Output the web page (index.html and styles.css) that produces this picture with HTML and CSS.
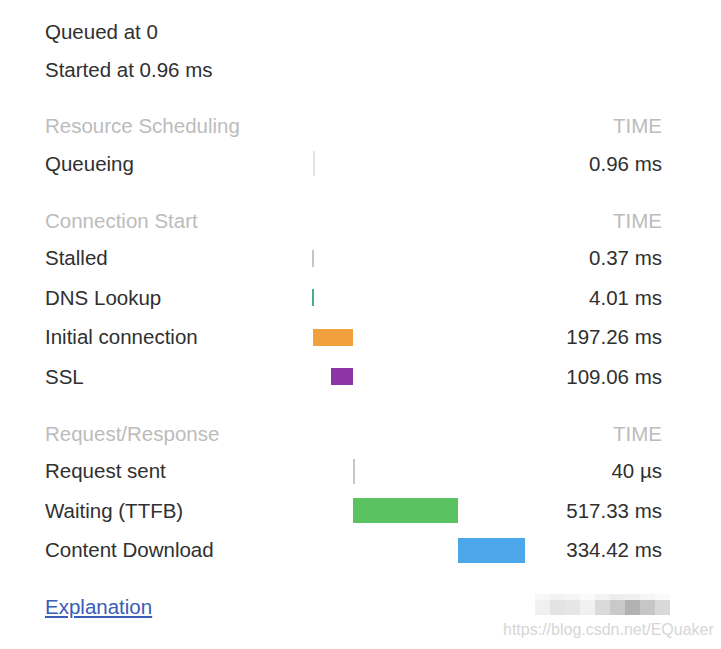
FILE: index.html
```html
<!DOCTYPE html>
<html lang="en">
<head>
    <meta charset="UTF-8">
    <meta name="viewport" content="width=device-width, initial-scale=1.0">
    <title>Timing</title>
    <link rel="stylesheet" href="styles.css">
</head>
<body>

    <div class="timing">
        <!-- Queue info -->
        <div class="info">
            <div class="info-row">Queued at 0</div>
            <div class="info-row">Started at 0.96 ms</div>
        </div>

        <!-- Resource Scheduling -->
        <div class="section tall">
            <div class="row header">
                <span class="label">Resource Scheduling</span>
                <span class="track"></span>
                <span class="time">TIME</span>
            </div>
            <div class="row">
                <span class="label">Queueing</span>
                <span class="track"><i class="bar line queueing" style="margin-left: 1px; width: 2px;"></i></span>
                <span class="time">0.96 ms</span>
            </div>
        </div>

        <!-- Connection Start -->
        <div class="section">
            <div class="row header">
                <span class="label">Connection Start</span>
                <span class="track"></span>
                <span class="time">TIME</span>
            </div>
            <div class="row">
                <span class="label">Stalled</span>
                <span class="track"><i class="bar line stalled" style="margin-left: 0px; width: 2px;"></i></span>
                <span class="time">0.37 ms</span>
            </div>
            <div class="row">
                <span class="label">DNS Lookup</span>
                <span class="track"><i class="bar dns" style="margin-left: 0px; width: 2px;"></i></span>
                <span class="time">4.01 ms</span>
            </div>
            <div class="row">
                <span class="label">Initial connection</span>
                <span class="track"><i class="bar connect" style="margin-left: 1px; width: 40px;"></i></span>
                <span class="time">197.26 ms</span>
            </div>
            <div class="row">
                <span class="label">SSL</span>
                <span class="track"><i class="bar ssl" style="margin-left: 19px; width: 22px;"></i></span>
                <span class="time">109.06 ms</span>
            </div>
        </div>

        <!-- Request/Response -->
        <div class="section tall">
            <div class="row header">
                <span class="label">Request/Response</span>
                <span class="track"></span>
                <span class="time">TIME</span>
            </div>
            <div class="row">
                <span class="label">Request sent</span>
                <span class="track"><i class="bar line sent" style="margin-left: 41px; width: 2px;"></i></span>
                <span class="time">40 µs</span>
            </div>
            <div class="row">
                <span class="label">Waiting (TTFB)</span>
                <span class="track"><i class="bar waiting" style="margin-left: 41px; width: 105px;"></i></span>
                <span class="time">517.33 ms</span>
            </div>
            <div class="row">
                <span class="label">Content Download</span>
                <span class="track"><i class="bar download" style="margin-left: 146px; width: 67px;"></i></span>
                <span class="time">334.42 ms</span>
            </div>
        </div>

        <a class="explain" href="#">Explanation</a>
    </div>

    <!-- blurred watermark -->
    <div class="watermark">
        <div class="mosaic">
            <i style="background: #f7f7f7;"></i><i style="background: #f2f2f2;"></i><i style="background: #f5f5f5;"></i><i style="background: #fafafa;"></i><i style="background: #f3f3f3;"></i><i style="background: #ededed;"></i><i style="background: #f0f0f0;"></i><i style="background: #f6f6f6;"></i><i style="background: #fafafa;"></i>
            <i style="background: #f0f0f0;"></i><i style="background: #e3e3e3;"></i><i style="background: #e6e6e6;"></i><i style="background: #f1f1f1;"></i><i style="background: #dadada;"></i><i style="background: #c9c9c9;"></i><i style="background: #b2b2b2;"></i><i style="background: #c6c6c6;"></i><i style="background: #d9d9d9;"></i>
        </div>
        <div class="wm-text">https://blog.csdn.net/EQuaker</div>
    </div>

</body>
</html>
```

FILE: styles.css
```css
body {
    margin: 0;
    background-color: #fff;
    font-family: "Liberation Sans", Arial, sans-serif;
    font-size: 20.5px;
    color: #303030;
    position: relative;
    width: 721px;
    height: 649px;
    overflow: hidden;
}
.timing {
    padding: 13px 0 0 45px;
    width: 617px;
}
.info-row {
    height: 38px;
    line-height: 38px;
}
.section {
    margin-top: 19px;
}
.row {
    display: grid;
    grid-template-columns: 267px 1fr auto;
    align-items: center;
    height: 39.5px;
}
.row.header {
    height: 36px;
    color: #bcbcbc;
}
.label {
    white-space: nowrap;
}
.time {
    text-align: right;
    white-space: nowrap;
}
.track {
    display: flex;
    align-items: center;
}
.bar {
    display: block;
    height: 17px;
}
.tall .bar {
    height: 25px;
}
.queueing { background-color: #e4e4e4; }
.stalled { background-color: #c4c4c4; }
.dns { background-color: #4fa98a; }
.connect { background-color: #f0a03d; }
.ssl { background-color: #8d35a7; }
.sent { background-color: #c8c8c8; }
.waiting { background-color: #5bc262; }
.download { background-color: #4ba7ea; }

.explain {
    display: inline-block;
    margin-top: 25px;
    color: #3a5bb6;
    text-decoration: underline;
    line-height: 24px;
}

.watermark {
    position: absolute;
    left: 503px;
    top: 594px;
}
.mosaic {
    display: grid;
    grid-template-columns: repeat(9, 15px);
    grid-auto-rows: 6px 15px;
    margin-left: 32px;
}
.mosaic i {
    display: block;
}
.wm-text {
    font-size: 16px;
    color: #d6d6d6;
    margin-top: 5px;
    line-height: 20px;
}
```
